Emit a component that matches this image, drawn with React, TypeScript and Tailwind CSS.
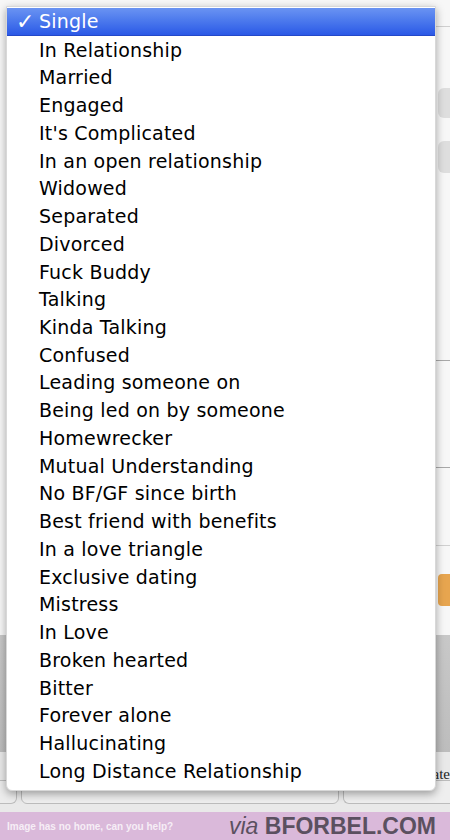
import React from "react";

const items = [
  "Single",
  "In Relationship",
  "Married",
  "Engaged",
  "It's Complicated",
  "In an open relationship",
  "Widowed",
  "Separated",
  "Divorced",
  "Fuck Buddy",
  "Talking",
  "Kinda Talking",
  "Confused",
  "Leading someone on",
  "Being led on by someone",
  "Homewrecker",
  "Mutual Understanding",
  "No BF/GF since birth",
  "Best friend with benefits",
  "In a love triangle",
  "Exclusive dating",
  "Mistress",
  "In Love",
  "Broken hearted",
  "Bitter",
  "Forever alone",
  "Hallucinating",
  "Long Distance Relationship",
];

export default function App() {
  return (
    <div className="relative w-[450px] h-[840px] overflow-hidden bg-[#f3f3f3]" style={{ fontFamily: '"DejaVu Sans", "Liberation Sans", sans-serif' }}>
      {/* background page (blurred behind the menu) */}
      <div className="flex flex-col h-full">
        <div className="flex h-[635px] bg-[#f7f7f7]">
          <div className="flex-1" />
          <div className="w-[14px] flex flex-col pt-[26px]">
            <div className="h-px bg-[#cfcfcf]" />
            <div className="mt-[61px] ml-[2px] h-[30px] rounded-l-md bg-[#dedede]" />
            <div className="mt-[23px] ml-[2px] h-[32px] rounded-l-md bg-[#dedede]" />
            <div className="mt-[187px] h-px bg-[#a8a8a8]" />
            <div className="mt-[106px] h-px bg-[#a8a8a8]" />
            <div className="mt-[77px] h-px bg-[#d0d0d0]" />
            <div className="mt-[28px] ml-[2px] h-[32px] rounded-l bg-[#e7a54f]" />
          </div>
        </div>
        <div className="h-[117px] bg-gradient-to-b from-[#c8c8c8] to-[#bdbdbd]" />
        <div className="h-[60px] bg-[#e9e9e9] flex items-end gap-[4px] pb-[8px] pl-0">
          <div className="w-[17px] h-[24px] rounded-r-md border border-l-0 border-[#bcbcbc] bg-[#ececec]" />
          <div className="w-[318px] h-[24px] rounded-md border border-[#bcbcbc] bg-[#eeeeee]" />
          <div className="flex-1 h-[24px] rounded-l-md border border-r-0 border-[#bcbcbc] bg-[#eeeeee] flex justify-end">
            <span className="-mt-[14px] text-[15px] leading-none text-[#222]" style={{ fontFamily: '"Liberation Serif", serif' }}>ate</span>
          </div>
        </div>
        <div className="h-[28px] bg-[#dab9da] flex items-center justify-between pl-[7px] pr-[14px]" style={{ fontFamily: '"Liberation Sans", Arial, sans-serif' }}>
          <span className="text-[10px] font-bold text-[#f6eef6]">Image has no home, can you help?</span>
          <span className="text-[23px] leading-none text-[#5b5060]">
            <span className="italic">via</span> <span className="font-bold">BFORBEL.COM</span>
          </span>
        </div>
      </div>

      {/* dropdown menu */}
      <div className="absolute left-[6px] top-[6px] w-[430px] rounded-b-[6px] bg-white pt-px pb-[5px] shadow-[0_3px_8px_rgba(0,0,0,0.35)] border border-[#d8d8d8] text-[19px] tracking-[0.2px] text-black">
        {items.map((it, i) =>
          i === 0 ? (
            <div key={it} className="flex items-center h-[28px] bg-gradient-to-b from-[#6a93f2] to-[#2b58e6] text-white border-b border-[#2448c8]">
              <span className="w-[32px] pl-[9px] text-[22px] font-bold leading-none">✓</span>
              <span>{it}</span>
            </div>
          ) : (
            <div key={it} className="flex items-center h-[27.74px] pl-[32px]">
              {it}
            </div>
          )
        )}
      </div>
    </div>
  );
}
